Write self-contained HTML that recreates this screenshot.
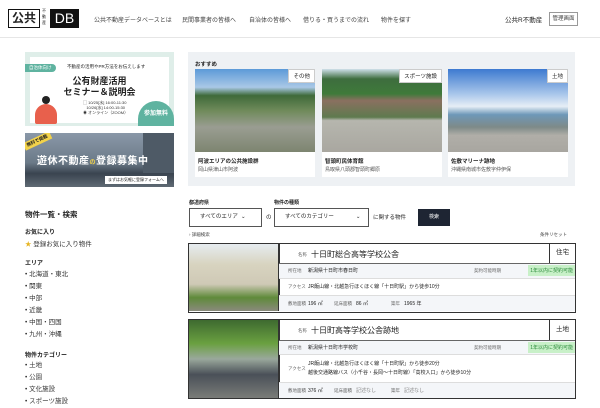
<!DOCTYPE html>
<html><head><meta charset="utf-8"><style>
*{box-sizing:border-box;margin:0;padding:0}
body{width:600px;height:400px;overflow:hidden;background:#fff;font-family:"Liberation Sans","Noto Sans CJK JP",sans-serif;color:#222;position:relative}
.a{position:absolute;white-space:nowrap}
.nav{font-size:6px;color:#444;top:15px}
.sb{font-size:6.5px;color:#333}
.sbh{font-size:6px;font-weight:bold;color:#222}
.card{position:absolute;width:120px;height:108px;background:#fff;top:69px}
.card .img{position:absolute;left:0;top:0;width:120px;height:83px}
.card .tag{position:absolute;right:0;top:0;background:#fff;font-size:5.5px;padding:2px 4px;border:1px solid #ccc}
.card .t1{position:absolute;left:3px;top:88px;font-size:5.5px;font-weight:bold}
.card .t2{position:absolute;left:3px;top:97px;font-size:5px;color:#555}
.pc{position:absolute;left:188px;width:388px;border:1.5px solid #333;background:#fff}
.lbl{font-size:4.5px;color:#666}
.row{position:absolute;left:90px;right:0;border-top:1px solid #ddd;font-size:5.5px}
</style></head><body>
<!-- header -->
<div class="a" style="left:8px;top:9px;width:32px;height:19px;border:1.5px solid #111;font-size:12px;font-weight:bold;line-height:16px;text-align:center">公共</div>
<div class="a" style="left:42px;top:8px;font-size:4px;line-height:6px;width:6px;white-space:normal;color:#222">不動産</div>
<div class="a" style="left:50px;top:9px;width:29px;height:19px;background:#111;color:#fff;font-size:14px;line-height:19px;text-align:center">DB</div>
<div class="a nav" style="left:94px">公共不動産データベースとは</div>
<div class="a nav" style="left:182px">民間事業者の皆様へ</div>
<div class="a nav" style="left:249px">自治体の皆様へ</div>
<div class="a nav" style="left:303px">借りる・買うまでの流れ</div>
<div class="a nav" style="left:381px">物件を探す</div>
<div class="a" style="left:505px;top:14px;font-size:6.5px">公共R不動産</div>
<div class="a" style="left:549px;top:12px;width:29px;height:14px;border:1px solid #999;font-size:5.5px;line-height:12px;text-align:center;color:#444">管理画面</div>
<div class="a" style="left:0;top:37px;width:600px;height:1px;background:#e6e6e6"></div>
<!-- banners -->
<div class="a" style="left:25px;top:52px;width:149px;height:74px;background:#dfeee9">
 <div class="a" style="left:5px;top:5px;width:139px;height:66px;background:#fff"></div>
 <div class="a" style="left:0;top:12px;background:#5fb3a0;color:#fff;font-size:4.5px;padding:1px 4px;border-radius:0 6px 6px 0">自治体向け</div>
 <div class="a" style="left:42px;top:12px;font-size:4.5px">不動産の活用やPR方法をお伝えします</div>
 <div class="a" style="left:0;width:149px;text-align:center;top:24px;font-size:9px;font-weight:bold;line-height:11px">公有財産活用<br>セミナー＆説明会</div>
 <div class="a" style="left:58px;top:48px;font-size:4px;line-height:5px;color:#333">▢ 10/25[水] 16:00-11:30<br>&nbsp;&nbsp;&nbsp;10/26[水] 14:00-15:30<br>◉ オンライン（ZOOM）</div>
 <div class="a" style="left:113px;top:49px;width:36px;height:25px;background:#5fb3a0;border-radius:18px 18px 0 0;color:#fff;font-size:6px;font-weight:bold;text-align:center;padding-top:7px">参加無料</div>
 <div class="a" style="left:10px;top:52px;width:22px;height:20px;background:#e8604c;border-radius:12px 12px 2px 2px"></div>
 <div class="a" style="left:17px;top:44px;width:8px;height:8px;background:#222;border-radius:50%"></div>
</div>
<div class="a" style="left:25px;top:133px;width:149px;height:54px;background:linear-gradient(180deg,#8a98a8 0%,#6b7a88 55%,#3a4450 75%,#5f6a74 100%);overflow:hidden">
 <div class="a" style="left:118px;top:0;width:31px;height:40px;background:#4e5a66"></div>
 <div class="a" style="left:-2px;top:4px;background:#f2d24a;font-size:4.5px;padding:1px 3px;transform:rotate(-25deg);font-weight:bold">無料で掲載</div>
 <div class="a" style="left:12px;top:19px;font-size:10px;font-weight:bold;color:#fff;letter-spacing:.5px">遊休不動産<span style="font-size:6px;color:#f2d24a">の</span>登録募集中</div>
 <div class="a" style="left:80px;top:43px;background:#fff;font-size:4px;padding:1px 3px">まずはお気軽に登録フォームへ</div>
</div>
<!-- recommended -->
<div class="a" style="left:188px;top:52px;width:387px;height:134px;background:#eef1f4"></div>
<div class="a" style="left:195px;top:60px;font-size:5.5px;font-weight:bold">おすすめ</div>
<div class="card" style="left:195px"><div class="img" style="background:linear-gradient(180deg,#5c9ad8 0%,#a9c8e6 22%,#3f6a3a 32%,#6f8a5a 50%,#9a9d92 70%,#7d8570 100%)"></div><div class="tag">その他</div><div class="t1">阿波エリアの公共施設群</div><div class="t2">岡山県津山市阿波</div></div>
<div class="card" style="left:322px"><div class="img" style="background:linear-gradient(180deg,#cfe0ea 0%,#3e6d3e 12%,#3f7a3a 30%,#8a7060 38%,#5e7a4e 58%,#b6b6ae 62%,#a9a7a0 100%)"></div><div class="tag">スポーツ施設</div><div class="t1">智頭町民体育館</div><div class="t2">鳥取県八頭郡智頭町郷原</div></div>
<div class="card" style="left:448px"><div class="img" style="background:linear-gradient(180deg,#3d7ad0 0%,#a8c6ea 30%,#e6eef6 45%,#6e98b8 55%,#7e8a88 70%,#b0aea8 80%,#a8a6a0 100%)"></div><div class="tag">土地</div><div class="t1">佐敷マリーナ跡地</div><div class="t2">沖縄県南城市佐敷字仲伊保</div></div>
<!-- sidebar -->
<div class="a" style="left:25px;top:209px;font-size:7.5px;font-weight:bold">物件一覧・検索</div>
<div class="a sbh" style="left:25px;top:227px">お気に入り</div>
<div class="a sb" style="left:25px;top:238px"><span style="color:#e6b422">★</span> 登録お気に入り物件</div>
<div class="a sbh" style="left:25px;top:258px">エリア</div>
<div class="a sb" style="left:25px;top:269px;line-height:12px;white-space:normal">• 北海道・東北<br>• 関東<br>• 中部<br>• 近畿<br>• 中国・四国<br>• 九州・沖縄</div>
<div class="a sbh" style="left:25px;top:350px">物件カテゴリー</div>
<div class="a sb" style="left:25px;top:360px;line-height:12px;white-space:normal">• 土地<br>• 公園<br>• 文化施設<br>• スポーツ施設</div>
<!-- search -->
<div class="a" style="left:189px;top:199px;font-size:5px;font-weight:bold">都道府県</div>
<div class="a" style="left:274px;top:199px;font-size:5px;font-weight:bold">物件の種類</div>
<div class="a" style="left:189px;top:208px;width:73px;height:19px;border:1px solid #555;font-size:5.5px;line-height:17px;padding-left:10px">すべてのエリア &nbsp;⌄</div>
<div class="a" style="left:266px;top:213px;font-size:5.5px">の</div>
<div class="a" style="left:274px;top:208px;width:95px;height:19px;border:1px solid #555;font-size:5.5px;line-height:17px;padding-left:10px">すべてのカテゴリー<span style="margin-left:22px">⌄</span></div>
<div class="a" style="left:373px;top:213px;font-size:5.5px">に関する物件</div>
<div class="a" style="left:418px;top:209px;width:32px;height:17px;background:#1e2533;color:#fff;font-size:5px;line-height:17px;text-align:center">検索</div>
<div class="a" style="left:189px;top:232px;font-size:4.5px;color:#444">› 詳細検索</div>
<div class="a" style="left:540px;top:232px;font-size:4.5px;color:#444">条件リセット</div>
<!-- property 1 -->
<div class="pc" style="top:243px;height:70px">
 <div class="a" style="left:0;top:0;width:89px;height:67px;background:linear-gradient(180deg,#e6ecf0 0%,#d8d4c0 30%,#cfc9b6 60%,#5f8a3a 80%,#8a8a7c 100%)"></div>
 <div class="a" style="left:89px;top:0;width:1.5px;height:67px;background:#333"></div>
 <div class="a lbl" style="left:109px;top:8px">名称</div>
 <div class="a" style="left:122px;top:5px;font-size:8px">十日町総合高等学校公舎</div>
 <div class="a" style="right:0;top:0;width:26px;height:19px;border-left:1.5px solid #333;font-size:6.5px;line-height:18px;text-align:center">住宅</div>
 <div class="row" style="top:19px;height:15px;background:#f4f6f9;border-top:1.5px solid #666"><span class="a lbl" style="left:9px;top:4px">所在地</span><span class="a" style="left:29px;top:3px;font-size:5px">新潟県十日町市春日町</span><span class="a lbl" style="left:195px;top:4px">契約可能時期</span><span class="a" style="right:0;top:1px;background:#c8f0c8;color:#2a8a3a;font-size:5px;padding:2px 2px">1年以内に契約可能</span></div>
 <div class="row" style="top:34px;height:17px"><span class="a lbl" style="left:9px;top:5px">アクセス</span><span class="a" style="left:29px;top:4px;font-size:5px">JR飯山線・北越急行ほくほく線「十日町駅」から徒歩10分</span></div>
 <div class="row" style="top:51px;height:16px;background:#f4f6f9"><span class="a lbl" style="left:9px;top:5px">敷地面積</span><span class="a" style="left:29px;top:4px;font-size:5px">196 ㎡</span><span class="a lbl" style="left:55px;top:5px">延床面積</span><span class="a" style="left:77px;top:4px;font-size:5px">86 ㎡</span><span class="a lbl" style="left:112px;top:5px">築年</span><span class="a" style="left:125px;top:4px;font-size:5px">1965 年</span></div>
</div>
<!-- property 2 -->
<div class="pc" style="top:319px;height:80px">
 <div class="a" style="left:0;top:0;width:89px;height:78px;background:linear-gradient(180deg,#3e6a30 0%,#6aa040 30%,#9aa89c 50%,#4a5058 70%,#7a7c78 100%)"></div>
 <div class="a" style="left:89px;top:0;width:1.5px;height:78px;background:#333"></div>
 <div class="a lbl" style="left:109px;top:8px">名称</div>
 <div class="a" style="left:122px;top:5px;font-size:8px">十日町高等学校公舎跡地</div>
 <div class="a" style="right:0;top:0;width:26px;height:20px;border-left:1.5px solid #333;font-size:6.5px;line-height:19px;text-align:center">土地</div>
 <div class="row" style="top:20px;height:14px;background:#f4f6f9;border-top:1.5px solid #666"><span class="a lbl" style="left:9px;top:4px">所在地</span><span class="a" style="left:29px;top:3px;font-size:5px">新潟県十日町市学校町</span><span class="a lbl" style="left:195px;top:4px">契約可能時期</span><span class="a" style="right:0;top:1px;background:#c8f0c8;color:#2a8a3a;font-size:5px;padding:2px 2px">1年以内に契約可能</span></div>
 <div class="row" style="top:34px;height:28px"><span class="a lbl" style="left:9px;top:11px">アクセス</span><span class="a" style="left:29px;top:5px;font-size:5px;line-height:9px">JR飯山線・北越急行ほくほく線「十日町駅」から徒歩20分<br>越後交通路線バス（小千谷・長岡〜十日町線）「高校入口」から徒歩10分</span></div>
 <div class="row" style="top:62px;height:16px;background:#f4f6f9"><span class="a lbl" style="left:9px;top:5px">敷地面積</span><span class="a" style="left:29px;top:4px;font-size:5px">376 ㎡</span><span class="a lbl" style="left:55px;top:5px">延床面積</span><span class="a" style="left:77px;top:4px;font-size:5px;color:#888">記述なし</span><span class="a lbl" style="left:112px;top:5px">築年</span><span class="a" style="left:125px;top:4px;font-size:5px;color:#888">記述なし</span></div>
</div>
</body></html>
